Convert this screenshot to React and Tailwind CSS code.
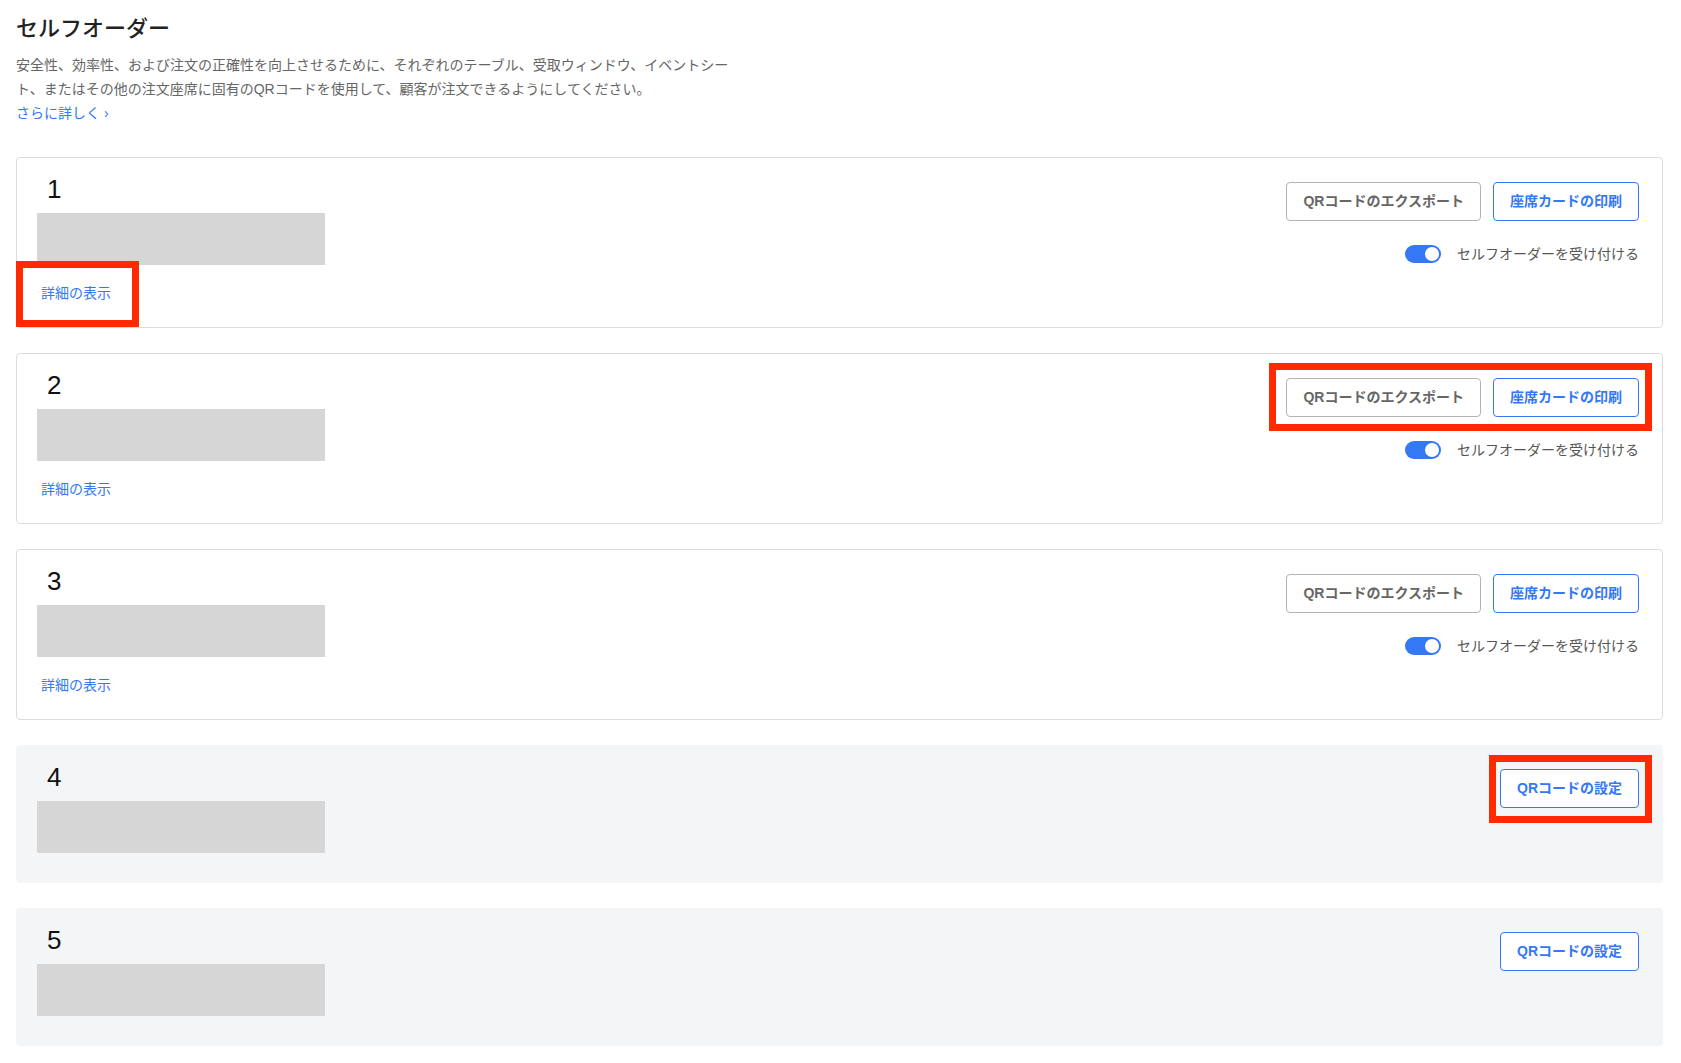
import React from "react";

const seats = [
  { id: 1, enabled: true, markDetail: true },
  { id: 2, enabled: true, markButtons: true },
  { id: 3, enabled: true },
  { id: 4, enabled: false, markSetup: true },
  { id: 5, enabled: false },
];

const Mark = ({ className }) => (
  <span className={`pointer-events-none absolute border-[7px] border-[#ff2a00] ${className}`} />
);

const Toggle = () => (
  <span className="flex h-[18px] w-[36px] items-center justify-end rounded-full bg-[#3478f6] pr-[2px]">
    <span className="h-[14px] w-[14px] rounded-full bg-white" />
  </span>
);

const SeatCard = ({ seat }) => {
  const { id, enabled, markDetail, markButtons, markSetup } = seat;

  return (
    <div
      className={
        enabled
          ? "flex justify-between rounded border border-[#dcdcdc] bg-white"
          : "flex justify-between rounded border border-[#f4f5f7] bg-[#f4f5f7]"
      }
    >
      <div className={enabled ? "flex flex-col pl-5 pt-[15px] pb-[24px]" : "flex flex-col pl-5 pt-[15px] pb-[29px]"}>
        <span className="ml-[10px] font-['Liberation_Sans',Arial,sans-serif] text-[26px] leading-[32px] text-[#111]">
          {id}
        </span>
        <div className="mt-2 h-[52px] w-[288px] bg-[#d6d6d6]" />
        {enabled && (
          <span className="relative mt-[18px] ml-1 w-fit text-[14px] leading-5">
            <a href="#" className="text-[#3478f6]">
              詳細の表示
            </a>
            {markDetail && <Mark className="-left-[25px] -right-[28px] -top-[22px] -bottom-[24px]" />}
          </span>
        )}
      </div>

      {enabled ? (
        <div className="flex flex-col items-end pt-6 pr-[23px]">
          <div className="relative flex gap-3">
            <button className="h-[39px] rounded border border-[#b3b3b3] bg-white px-4 text-[14px] font-semibold text-[#666]">
              QRコードのエクスポート
            </button>
            <button className="h-[39px] rounded border border-[#3478f6] bg-white px-4 text-[14px] font-semibold text-[#3478f6]">
              座席カードの印刷
            </button>
            {markButtons && <Mark className="-left-[17px] -right-[13px] -top-[15px] -bottom-[14px]" />}
          </div>
          <div className="mt-6 flex items-center gap-4">
            <Toggle />
            <span className="text-[14px] leading-[18px] text-[#555]">セルフオーダーを受け付ける</span>
          </div>
        </div>
      ) : (
        <div className="flex flex-col items-end pt-[23px] pr-[23px]">
          <div className="relative">
            <button className="h-[39px] rounded border border-[#3478f6] bg-white px-4 text-[14px] font-semibold text-[#3478f6]">
              QRコードの設定
            </button>
            {markSetup && <Mark className="-left-[11px] -right-[13px] -top-[14px] -bottom-[15px]" />}
          </div>
        </div>
      )}
    </div>
  );
};

const App = () => {
  return (
    <div className="min-h-screen bg-white pl-4 pr-[18px] pt-[14px] pb-5 font-['Liberation_Sans','Noto_Sans_CJK_JP',sans-serif]">
      <h1 className="text-[22px] font-medium leading-[30px] text-[#222]">セルフオーダー</h1>
      <p className="mt-[9px] max-w-[720px] text-[14px] leading-6 text-[#666]">
        安全性、効率性、および注文の正確性を向上させるために、それぞれのテーブル、受取ウィンドウ、イベントシート、またはその他の注文座席に固有のQRコードを使用して、顧客が注文できるようにしてください。
      </p>
      <a href="#" className="block text-[14px] leading-6 text-[#3478f6]">
        さらに詳しく ›
      </a>

      <div className="mt-8 flex flex-col gap-[25px]">
        {seats.map((seat) => (
          <SeatCard key={seat.id} seat={seat} />
        ))}
      </div>
    </div>
  );
};

export default App;
